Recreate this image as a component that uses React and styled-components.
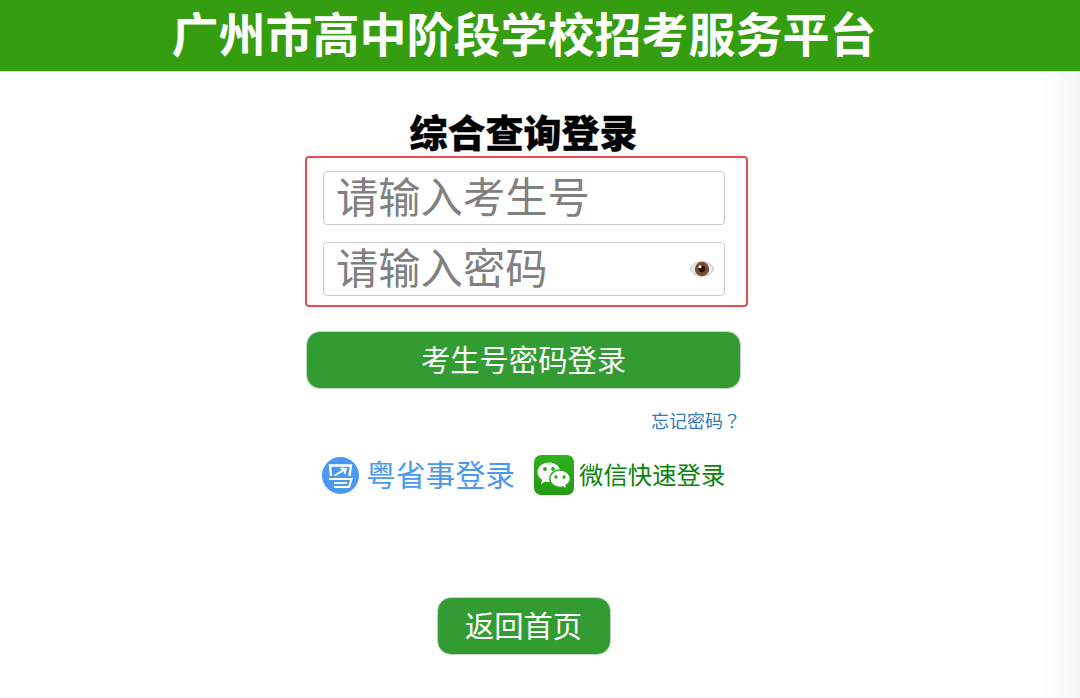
import React from "react";
import styled, { createGlobalStyle } from "styled-components";

const Global = createGlobalStyle`
  html, body { margin: 0; padding: 0; height: 100%; background: #fff; }
  #root { height: 100%; }
  * { box-sizing: border-box; }
`;
const FONT = `"Liberation Sans", "Noto Sans CJK SC", sans-serif`;

const Page = styled.div`
  width: 1080px; height: 698px; overflow: hidden;
  font-family: ${FONT};
  background: linear-gradient(to right, rgba(245,245,245,0) 1040px, #f5f5f5 1080px), #fff;
`;
const Header = styled.header`
  height: 72px; background: #349e10;
  border-bottom: 1px solid #d4f2c4;
  display: flex; align-items: center; justify-content: center;
`;
const SiteTitle = styled.h1`
  margin: 1px 0 0 -32px; color: #fff; font-size: 47px; font-weight: 700; line-height: 68px;
`;
const Column = styled.main`
  width: 435px; margin-left: 306px;
  display: flex; flex-direction: column;
`;
const Heading = styled.h2`
  margin: 40px 0 0 0; height: 44px; color: #000; font-size: 38px; font-weight: 900; line-height: 44px; text-align: center;
  -webkit-text-stroke: 0.3px #000;
`;
const Fields = styled.div`
  width: 443px; height: 151px; margin-left: -1px;
  border: 2px solid #e84c4c; border-radius: 4px;
  padding: 13px 0 0 16px;
  display: flex; flex-direction: column; gap: 17px;
`;
const Field = styled.div`
  width: 402px; height: 54px; border: 1px solid #ccc; border-radius: 4px;
  padding-left: 12px; padding-right: 9px; display: flex; align-items: center; justify-content: space-between;
`;
const Placeholder = styled.span`
  color: #808080; font-size: 42.3px; line-height: 50px; margin-top: 2px;
`;
const Primary = styled.button`
  font-family: ${FONT}; color: #fff; font-size: 29.3px; line-height: 36px; padding: 2px 0 0;
  background: #329b32; border: 1px solid #c4d8c4; border-radius: 14px;
  display: flex; align-items: center; justify-content: center;
`;
const LoginButton = styled(Primary)`
  width: 435px; height: 58px; margin-top: 24px;
`;
const ForgotRow = styled.div`
  margin-top: 19px; text-align: right; height: 26px;
`;
const Forgot = styled.a`
  color: #337ab7; font-family: "Noto Sans CJK TC", "Noto Sans CJK SC", sans-serif;
  font-size: 18px; line-height: 24px; text-decoration: none;
`;
const Alternatives = styled.div`
  margin-top: 20px; display: flex; align-items: center; padding-left: 16px;
`;
const AltLink = styled.a`
  display: flex; align-items: center; text-decoration: none;
  color: ${p => p.$color}; font-size: ${p => p.$size}px; line-height: 40px;
  gap: ${p => p.$gap}px; margin-right: ${p => p.$mr || 0}px;
`;
const AltLabel = styled.span`
  padding-top: 2px;
`;
const BackRow = styled.div`
  margin-top: 101px; display: flex; justify-content: center;
`;
const BackButton = styled(Primary)`
  width: 174px; height: 58px;
`;

const Eye = () => (
  <svg width="26" height="22" viewBox="0 0 26 22">
    <path d="M1.500 11C5 1.500 21 1.500 24.500 11C21 20.500 5 20.500 1.500 11Z" fill="#eeeeee" stroke="#b8b8b8" strokeWidth="1" />
    <circle cx="13" cy="11" r="7.200" fill="#7d4a30" />
    <circle cx="13" cy="11" r="3.200" fill="#1c1512" />
    <circle cx="11" cy="8.800" r="1.500" fill="#fff" />
  </svg>
);

const YueIcon = () => (
  <svg width="37" height="37" viewBox="0 0 37 37">
    <circle cx="18.5" cy="18.5" r="18.5" fill="#4a98f0" />
    <path d="M9 19L8 8.500H29L27.500 19" fill="none" stroke="#fff" strokeWidth="2.400" />
    <path d="M12.500 18.500L23 12.500M18.500 11.500L23.800 12L22.500 17" fill="none" stroke="#fff" strokeWidth="2" />
    <path d="M7 22H29.500L27 30H12" fill="none" stroke="#fff" strokeWidth="2.200" />
    <path d="M12 26H25" fill="none" stroke="#fff" strokeWidth="1.800" />
  </svg>
);

const WeChatIcon = () => (
  <svg width="40" height="40" viewBox="0 0 40 40">
    <defs>
      <linearGradient id="wx" x1="0" y1="0" x2="0" y2="1">
        <stop offset="0" stopColor="#2eb11c" />
        <stop offset="1" stopColor="#259a14" />
      </linearGradient>
    </defs>
    <rect width="40" height="40" rx="7" fill="url(#wx)" />
    <path d="M15 7.500C8.500 7.500 3.500 11.800 3.500 17.200C3.500 20.400 5.300 23 8 24.800L7 29L11.400 26.400C12.700 26.800 13.900 27 15 27C21.500 27 26.500 22.600 26.500 17.200C26.500 11.800 21.500 7.500 15 7.500Z" fill="#fff" />
    <path d="M26 15C20.300 15 15.800 18.900 15.800 23.700C15.800 28.500 20.300 32.400 26 32.400C27.200 32.400 28.300 32.200 29.400 31.900L33 34.500L32 30.400C34.600 28.800 36.300 26.400 36.300 23.700C36.300 18.900 31.700 15 26 15Z" fill="#fff" stroke="#2aa818" strokeWidth="1.400" />
    <circle cx="11" cy="14" r="1.900" fill="#2aa818" />
    <circle cx="19" cy="14" r="1.900" fill="#2aa818" />
    <circle cx="22" cy="22" r="1.700" fill="#2aa818" />
    <circle cx="30" cy="22" r="1.700" fill="#2aa818" />
  </svg>
);

export default function App() {
  return (
    <Page>
      <Global />
      <Header>
        <SiteTitle>广州市高中阶段学校招考服务平台</SiteTitle>
      </Header>
      <Column>
        <Heading>综合查询登录</Heading>
        <Fields>
          <Field><Placeholder>请输入考生号</Placeholder></Field>
          <Field><Placeholder>请输入密码</Placeholder><Eye /></Field>
        </Fields>
        <LoginButton>考生号密码登录</LoginButton>
        <ForgotRow><Forgot href="#">忘记密码？</Forgot></ForgotRow>
        <Alternatives>
          <AltLink href="#" $color="#4a98f0" $size={29.8} $gap={7} $mr={19}><YueIcon /><AltLabel>粤省事登录</AltLabel></AltLink>
          <AltLink href="#" $color="#0a830a" $size={24.4} $gap={5}><WeChatIcon /><AltLabel>微信快速登录</AltLabel></AltLink>
        </Alternatives>
        <BackRow><BackButton>返回首页</BackButton></BackRow>
      </Column>
    </Page>
  );
}
